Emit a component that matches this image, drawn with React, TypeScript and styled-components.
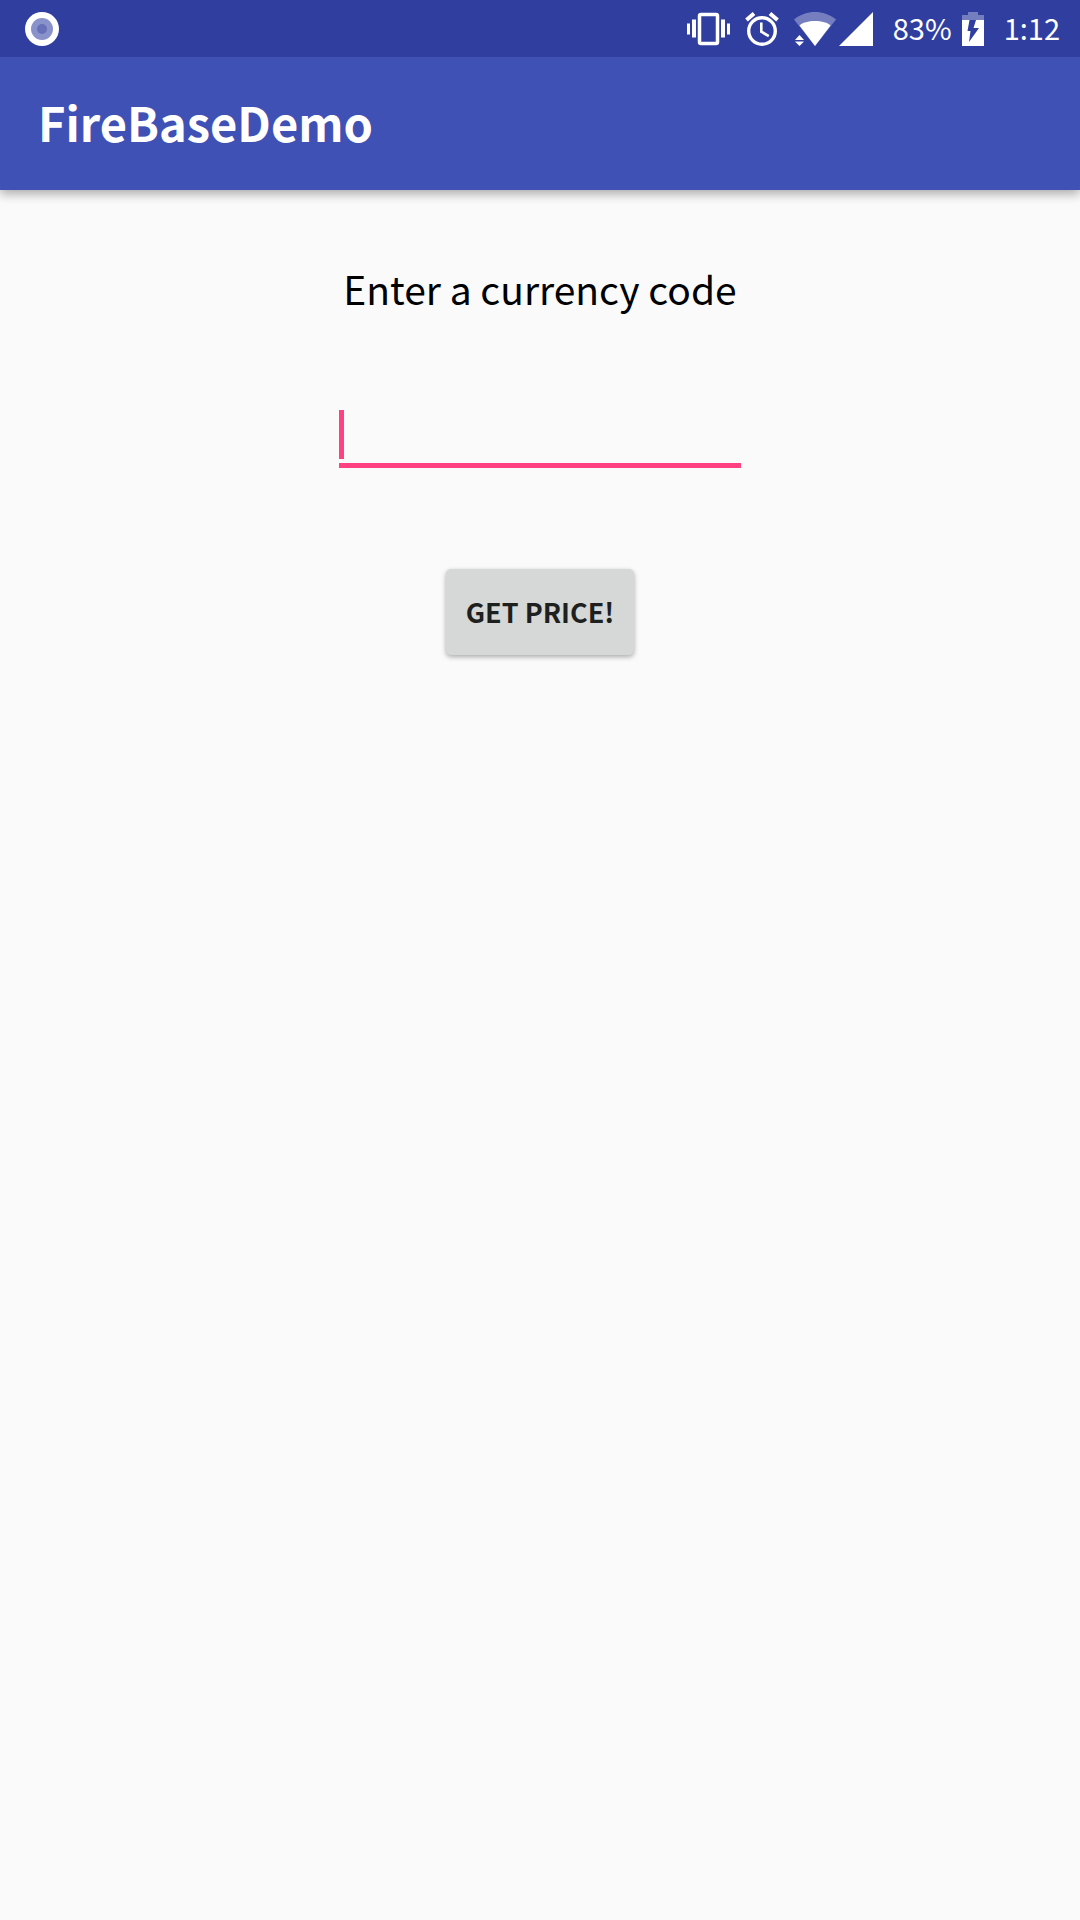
import React, { useState } from 'react';
import styled, { createGlobalStyle } from 'styled-components';

const GlobalStyle = createGlobalStyle`
  * { box-sizing: border-box; }
  body {
    margin: 0;
    background: #fafafa;
    font-family: "Noto Sans CJK SC", "Noto Sans", sans-serif;
  }
`;

const Screen = styled.div`
  display: flex;
  flex-direction: column;
  min-height: 100vh;
`;

const StatusBar = styled.div`
  display: flex;
  align-items: center;
  justify-content: space-between;
  height: 57px;
  padding: 0 20px 0 25px;
  background: #303f9f;
  color: #fff;

  svg { display: block; }
`;

const StatusGroup = styled.div<{ $gap: number }>`
  display: flex;
  align-items: center;
  gap: ${({ $gap }) => $gap}px;
`;

const StatusText = styled.span`
  padding-bottom: 4px;
  font-size: 29px;
  line-height: 40px;
`;

const AppBar = styled.header`
  display: flex;
  align-items: center;
  height: 133px;
  padding: 0 38px 4px;
  background: #3f51b5;
  box-shadow: 0 4px 10px rgba(0, 0, 0, 0.32);
  clip-path: inset(0 0 -24px 0);
`;

const Title = styled.h1`
  margin: 0;
  color: #fff;
  font-size: 47px;
  font-weight: 700;
  line-height: 64px;
`;

const Form = styled.form`
  display: flex;
  flex: 1;
  flex-direction: column;
  align-items: center;
  padding-top: 68px;
`;

const Label = styled.label`
  color: #000;
  font-size: 39px;
  line-height: 60px;
`;

const Field = styled.div`
  display: flex;
  width: 402px;
  margin-top: 92px;
  padding-bottom: 4px;
  border-bottom: 5px solid #ff4081;
`;

const Caret = styled.span`
  width: 5px;
  height: 49px;
  background: #ff4081;
`;

const Input = styled.input`
  flex: 1;
  min-width: 0;
  height: 49px;
  padding: 0;
  border: 0;
  outline: 0;
  background: transparent;
  caret-color: transparent;
  font: inherit;
  font-size: 39px;
`;

const Button = styled.button`
  margin-top: 101px;
  padding: 23px 20px;
  border: 0;
  border-radius: 5px;
  background: #d6d7d7;
  box-shadow: 0 2px 5px rgba(0, 0, 0, 0.32);
  color: #1e1f1f;
  font: inherit;
  font-size: 27px;
  font-weight: 700;
  line-height: 40px;
`;

const RecordIcon = () => (
  <svg width="34" height="34" viewBox="0 0 34 34" aria-hidden="true">
    <circle cx="17" cy="17" r="17" fill="#fff" />
    <circle cx="17" cy="17" r="11" fill="#8a92cb" />
    <circle cx="17" cy="17" r="5" fill="#6770b8" />
  </svg>
);

const VibrateIcon = () => (
  <svg width="43" height="34" viewBox="0 0 43 34" fill="#fff" aria-hidden="true">
    <rect x="12.5" y="2.5" width="18" height="29" rx="1.5" fill="none" stroke="#fff" strokeWidth="3.5" />
    <path d="M0 11.5h3v11H0zM5 7.5h4v18H5zM34 7.5h4v18h-4zM40 11.5h3v11h-3z" />
  </svg>
);

const AlarmIcon = () => (
  <svg width="34" height="34" viewBox="0 0 34 34" fill="none" stroke="#fff" strokeWidth="3.4" aria-hidden="true">
    <circle cx="17" cy="19" r="13.3" />
    <path d="M1.5 8 9 1.5M32.5 8 25 1.5" strokeWidth="4" />
    <path d="M16.3 10.5v9.2l7.5 4.5" strokeWidth="2.6" />
  </svg>
);

const WifiIcon = () => (
  <svg width="42" height="34" viewBox="0 0 42 34" aria-hidden="true">
    <path d="M0 7.5C12-2.5 30-2.5 42 7.5L21 34z" fill="#757fc0" />
    <path d="M5.5 13.500C11 7.500 31 7.500 36.500 13.500L21 34z" fill="#fff" />
    <path d="M1 28l4.500-5 4.500 5zM1 29.500h9L5.500 34z" fill="#fff" />
  </svg>
);

const SignalIcon = () => (
  <svg width="34" height="34" viewBox="0 0 34 34" aria-hidden="true">
    <path d="M34 0v34H0z" fill="#fff" />
  </svg>
);

const BatteryIcon = () => (
  <svg width="22" height="34" viewBox="0 0 22 34" aria-hidden="true">
    <path d="M6 0h10v3h6v6H0V3h6z" fill="#757fc0" />
    <path d="M0 8h22v26H0z" fill="#fff" />
    <path d="M7.5 8H14l-2.500 8H17L7 30l1.500-11H5.500z" fill="#303f9f" />
  </svg>
);

export default function App() {
  const [code, setCode] = useState('');

  return (
    <Screen>
      <GlobalStyle />
      <StatusBar>
        <RecordIcon />
        <StatusGroup $gap={20}>
          <StatusGroup $gap={15}>
            <VibrateIcon />
            <AlarmIcon />
            <StatusGroup $gap={3}>
              <WifiIcon />
              <SignalIcon />
            </StatusGroup>
          </StatusGroup>
          <StatusGroup $gap={10}>
            <StatusText>83%</StatusText>
            <BatteryIcon />
          </StatusGroup>
          <StatusText>1:12</StatusText>
        </StatusGroup>
      </StatusBar>
      <AppBar>
        <Title>FireBaseDemo</Title>
      </AppBar>
      <Form onSubmit={(event) => event.preventDefault()}>
        <Label htmlFor="currency">Enter a currency code</Label>
        <Field>
          {code === '' && <Caret />}
          <Input
            id="currency"
            autoComplete="off"
            value={code}
            onChange={(event) => setCode(event.target.value)}
          />
        </Field>
        <Button type="submit">GET PRICE!</Button>
      </Form>
    </Screen>
  );
}
